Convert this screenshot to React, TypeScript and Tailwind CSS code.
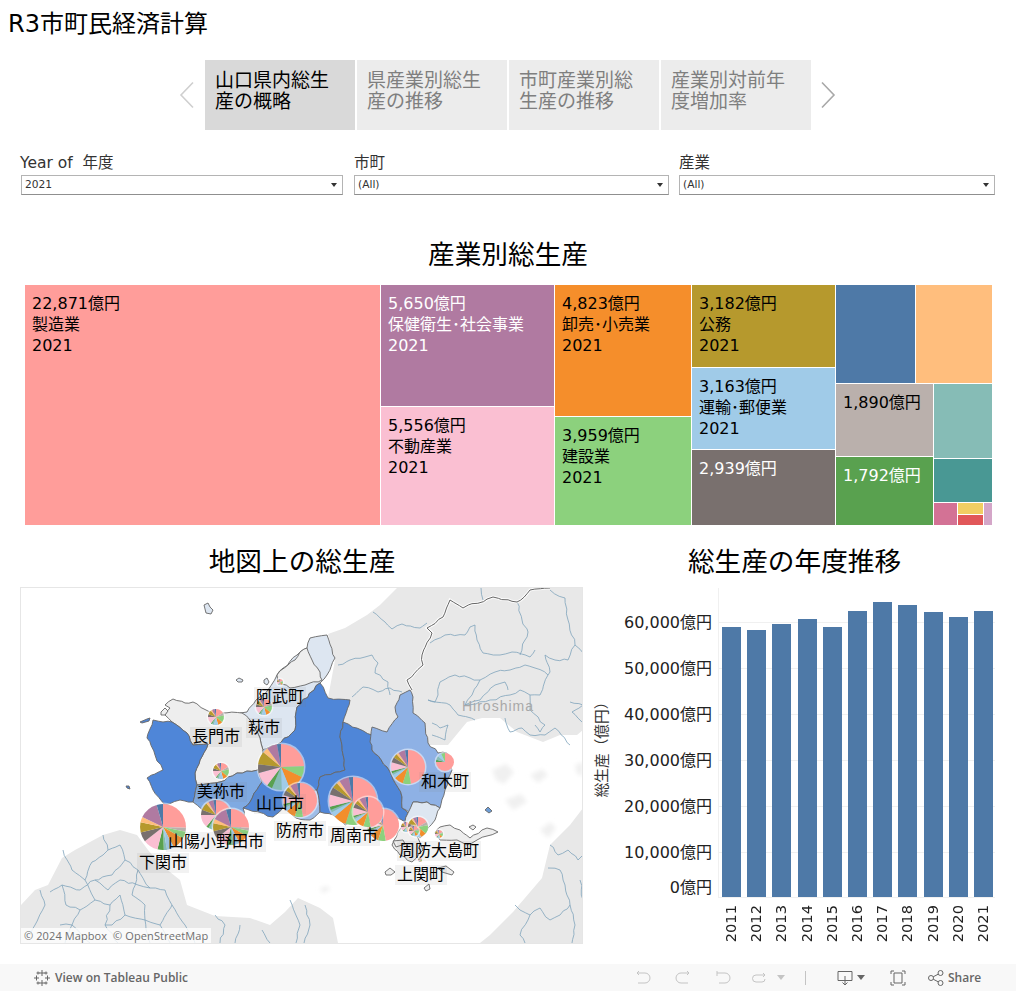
import type { ReactNode } from 'react'

const FONT = "font-['DejaVu_Sans','Noto_Sans_CJK_JP',sans-serif]"

const C = {
  salmon: '#ff9d9a', taupe: '#bab0ac', green: '#8cd17d', orange: '#f28e2b', sky: '#a0cbe8', teal: '#86bcb6',
  dgreen: '#59a14f', pink: '#fabfd2', grey: '#79706e', gold: '#b6992d', peach: '#ffbe7d', mauve: '#b07aa1', blue: '#4e79a7',
}

type Slice = [string, number]

const mixA: Slice[] = [[C.salmon, 88], [C.green, 28], [C.orange, 42], [C.sky, 20], [C.teal, 25], [C.dgreen, 14], [C.pink, 38], [C.grey, 22], [C.gold, 33], [C.peach, 14], [C.mauve, 26], [C.blue, 10]]
const mixB: Slice[] = [[C.salmon, 92], [C.taupe, 10], [C.green, 18], [C.orange, 32], [C.sky, 18], [C.teal, 8], [C.dgreen, 16], [C.pink, 38], [C.grey, 24], [C.gold, 26], [C.peach, 14], [C.mauve, 48], [C.blue, 16]]
const mixC: Slice[] = [[C.salmon, 170], [C.green, 28], [C.orange, 32], [C.sky, 12], [C.teal, 6], [C.dgreen, 8], [C.pink, 30], [C.grey, 18], [C.gold, 14], [C.peach, 8], [C.mauve, 24], [C.blue, 10]]
const mixD: Slice[] = [[C.salmon, 60], [C.taupe, 20], [C.green, 50], [C.orange, 35], [C.sky, 30], [C.teal, 15], [C.dgreen, 10], [C.pink, 50], [C.grey, 20], [C.gold, 30], [C.peach, 10], [C.mauve, 20], [C.blue, 10]]
const mixE: Slice[] = [[C.salmon, 270], [C.dgreen, 15], [C.teal, 25], [C.sky, 25], [C.green, 25]]

const pies: { x: number; y: number; r: number; mix: Slice[] }[] = [
  { x: 280, y: 682, r: 3, mix: mixD },
  { x: 216, y: 717, r: 8, mix: mixD },
  { x: 264, y: 707, r: 8, mix: mixD },
  { x: 221, y: 771, r: 8, mix: mixD },
  { x: 281, y: 767, r: 23, mix: mixA },
  { x: 300, y: 800, r: 17, mix: mixC },
  { x: 163, y: 827, r: 23, mix: mixB },
  { x: 216, y: 815, r: 15, mix: mixD },
  { x: 231, y: 827, r: 18, mix: mixB },
  { x: 353, y: 801, r: 24, mix: mixC },
  { x: 383, y: 825, r: 16, mix: mixC },
  { x: 368, y: 812, r: 15, mix: mixC },
  { x: 408, y: 767, r: 17, mix: mixC },
  { x: 445, y: 762, r: 9, mix: mixE },
  { x: 406, y: 827, r: 5, mix: mixD },
  { x: 418, y: 827, r: 10, mix: mixD },
  { x: 414, y: 831, r: 5, mix: mixD },
  { x: 439, y: 834, r: 4, mix: mixD },
  { x: 420, y: 860, r: 2, mix: mixD },
]

function Pie({ x, y, r, mix }: { x: number; y: number; r: number; mix: Slice[] }) {
  const total = mix.reduce((s, m) => s + m[1], 0)
  let a = 0
  const pt = (deg: number) => {
    const rad = ((deg - 90) * Math.PI) / 180
    return `${x + r * Math.cos(rad)} ${y + r * Math.sin(rad)}`
  }
  return (
    <g>
      <circle cx={x} cy={y} r={r + 1.5} fill="#ffffff" opacity="0.5" />
      {mix.map(([color, v], i) => {
        const sweep = (v / total) * 360
        const d = `M${x} ${y}L${pt(a)}A${r} ${r} 0 ${sweep > 180 ? 1 : 0} 1 ${pt(a + sweep)}Z`
        a += sweep
        return <path key={i} d={d} fill={color} />
      })}
    </g>
  )
}

// rough hand-traced outlines get a small wobble so they read as coast lines
const noise = (x: number, y: number) => {
  const n = Math.sin(x * 12.9898 + y * 78.233) * 43758.5453
  return n - Math.floor(n) - 0.5
}

function wobble(points: string, amp: number, closed: boolean) {
  const n = points.trim().split(/\s+/).map((p) => p.split(',').map(Number))
  const out: string[] = []
  const count = closed ? n.length : n.length - 1
  for (let i = 0; i < count; i++) {
    const [ax, ay] = n[i]
    const [bx, by] = n[(i + 1) % n.length]
    out.push(`${ax},${ay}`)
    const len = Math.hypot(bx - ax, by - ay)
    const steps = Math.max(1, Math.round(len / 5))
    for (let s = 1; s < steps; s++) {
      const px = ax + ((bx - ax) * s) / steps
      const py = ay + ((by - ay) * s) / steps
      const qx = Math.round(px * 2) / 2
      const qy = Math.round(py * 2) / 2
      out.push(`${(px + noise(qx, qy) * amp * 2).toFixed(1)},${(py + noise(qy, qx) * amp * 2).toFixed(1)}`)
    }
  }
  if (!closed) out.push(n[n.length - 1].join(','))
  return out.join(' ')
}

const regions: { fill: string; pts: string }[] = [
  { fill: '#dde6f1', pts: '240,713 247,712 256,700 268,690 277,675 297,655 307,648 310,638 327,635 335,658 327,675 320,683 297,707 295,730 277,745 263,750 260,738 250,720' },
  { fill: '#eeeeee', pts: '277,675 288,665 295,660 300,652 307,648 312,660 320,672 322,680 305,685 290,688 278,682' },
  { fill: '#eeeeee', pts: '165,705 173,699 185,703 193,702 210,712 223,713 242,713 250,720 260,738 263,750 258,770 237,773 220,782 197,785 195,773 200,760 208,744 193,745 187,733 172,722 165,715 170,708' },
  { fill: '#4f86d8', pts: '153,720 147,738 155,755 163,770 147,778 153,790 165,805 180,800 193,802 197,785 195,773 200,760 208,744 193,745 187,733 172,722 163,722' },
  { fill: '#7faae2', pts: '193,802 197,785 220,782 237,773 258,770 262,782 250,802 243,808 245,822 232,838 215,830 205,812' },
  { fill: '#4f86d8', pts: '320,683 328,698 350,700 343,722 340,737 345,770 320,777 317,790 300,790 287,798 283,808 273,817 243,808 250,802 262,782 258,770 263,750 277,745 295,730 297,707' },
  { fill: '#9fbde8', pts: '287,798 300,790 317,790 320,812 310,820 296,818 283,808' },
  { fill: '#4f86d8', pts: '343,722 372,735 372,750 387,767 402,797 402,808 408,813 405,822 380,808 370,818 345,825 333,815 320,812 317,790 320,777 345,770 340,737' },
  { fill: '#8eb1e5', pts: '410,690 400,695 395,707 398,717 387,732 372,727 370,742 372,750 387,767 402,797 402,808 410,813 413,802 427,802 440,808 445,790 452,770 447,753 438,753 428,743 425,723 413,713 413,697' },
  { fill: '#dde6f1', pts: '408,813 413,802 427,802 440,808 435,820 428,828 420,838 412,830 405,822' },
  { fill: '#eeeeee', pts: '405,822 418,838 423,850 412,862 400,855 392,845 398,832' },
  { fill: '#eeeeee', pts: '440,827 450,825 460,830 470,838 487,828 498,832 487,836 477,840 467,845 457,840 440,840 435,833' },
]

const labels = [
  { t: '阿武町', x: 280, y: 697 },
  { t: '萩市', x: 264, y: 728 },
  { t: '長門市', x: 216, y: 737 },
  { t: '美祢市', x: 221, y: 792 },
  { t: '山口市', x: 280, y: 804 },
  { t: '山陽小野田市', x: 216, y: 842 },
  { t: '下関市', x: 163, y: 863 },
  { t: '防府市', x: 300, y: 831 },
  { t: '周南市', x: 354, y: 836 },
  { t: '和木町', x: 445, y: 782 },
  { t: '周防大島町', x: 439, y: 851 },
  { t: '上関町', x: 421, y: 875 },
]

const rivers = [
  '373,612 385,622 392,629 402,624 420,628 427,623',
  '338,665 350,660 365,657 372,655 378,663 375,673 388,682 390,695',
  '352,697 363,687 378,692 390,688 402,692',
  '430,643 445,635 465,635 470,627 475,625 477,640 483,653 500,655 512,652 530,657 535,650',
  '517,602 522,620 528,632 525,640 520,655',
  '481,588 483,600',
  '550,590 565,598 568,620 575,645 568,660 555,660 545,655',
  '575,645 583,653',
  '545,655 550,672 548,675 535,668 525,665 510,670 495,672 480,680 470,678 455,675 440,682',
  '440,682 438,695 435,702 428,700 450,705 458,715 475,720',
  '480,680 472,695 465,705 480,700 495,685 505,682 508,690',
  '465,705 490,700 510,695 520,690 530,695 530,710 545,725 540,732 535,725',
  '548,675 540,695 530,695',
  '570,702 583,705 572,712 582,722',
  '432,723 440,728 448,725 445,740 432,735',
  '505,718 510,732 522,728 530,735',
  '530,735 545,735 555,728 570,745',
  '63,850 72,870 85,880 95,900 110,905 120,895',
  '103,835 108,850 120,845 125,860 138,870',
  '125,860 112,875 95,880 80,890 62,885 50,892',
  '138,870 150,888 165,890 172,905 160,925 170,943',
  '120,895 125,915 145,920 150,943',
  '95,900 80,910 72,925 90,943',
  '110,905 105,925 118,943',
  '172,905 185,925 195,943',
  '40,890 45,905 35,925 30,935',
  '85,880 92,862 103,855 108,850',
  '95,880 108,890 120,880 138,885 150,888',
  '62,885 66,905 80,910',
  '125,915 112,925 105,925',
  '145,920 160,925',
  '138,870 132,895 145,905 145,920',
  '60,925 72,925 65,943',
  '215,915 225,925 220,943',
  '240,925 235,943',
  '262,930 270,943',
  '290,900 300,925 296,943',
  '305,905 310,925 304,943',
  '550,845 558,855 568,850 578,860 583,855',
  '548,868 560,870 565,885 570,905 560,915 550,920 540,908 530,915 520,910 515,905',
  '570,905 575,925 572,943',
  '580,880 583,900',
  '530,915 520,935 525,943',
]

const border = wobble('550,588 530,590 517,602 493,597 463,608 450,600 443,617 427,628 432,633 422,655 423,665 407,680 412,690', 1.2, false)

function MapChart() {
  return (
    <div className="relative h-[357px] w-[563px] overflow-hidden border border-[#e6e6e6] bg-white">
      <svg className="block h-[355px] w-[561px]" viewBox="21 588 561 355">
        <defs>
          <filter id="soft"><feGaussianBlur stdDeviation="0.7" /></filter>
          <filter id="softer"><feGaussianBlur stdDeviation="2" /></filter>
        </defs>
        {/* surrounding land */}
        <g filter="url(#soft)" fill="#e8e8e8">
          <path d="M398 587L380 605 367 615 345 628 328 634 335 660 328 698 350 700 343 722 372 735 387 740 400 745 430 745 448 745 467 722 482 718 500 718 517 732 543 742 560 735 577 735 583 730 583 587Z" />
          <path d="M21 905L35 890 48 885 62 858 75 850 90 842 103 835 120 830 137 835 148 850 160 864 180 880 187 905 215 916 250 918 270 925 285 912 298 898 320 908 333 918 338 943 21 943Z" />
          <path d="M583 808L570 825 550 845 542 878 513 912 490 935 480 943 583 943Z" />
        </g>
        <g filter="url(#softer)" fill="#f0f0f0">
          <path d="M492 770l14 -6 8 8 -10 12 -8 -4Z M505 800l16 -6 6 8 -14 8Z M530 775l12 -6 6 6 -10 8Z M540 830l10 -8 6 6 -8 10Z M320 888l8 -2 2 4 -8 3Z M575 765l8 -3 0 14 -6 -2Z" />
        </g>
        <g fill="none" stroke="#7fa3bb" strokeWidth="0.8">
          {rivers.map((p) => <polyline key={p} points={wobble(p, 1.1, false)} />)}
        </g>
        <polyline points={border} fill="none" stroke="#ffffff" strokeWidth="3" opacity="0.8" />
        <polyline points={border} fill="none" stroke="#666666" strokeWidth="1" />
        <text x="498" y="711" textAnchor="middle" fill="#a8a8a8" fontSize="14" letterSpacing="1" fontFamily="'Liberation Sans', sans-serif">Hiroshima</text>

        {/* municipalities */}
        <g stroke="#666666" strokeWidth="0.9" strokeLinejoin="round">
          {regions.map((r) => <polygon key={r.pts} fill={r.fill} points={wobble(r.pts, 0.9, true)} />)}
          <path fill="#eeeeee" d="M393 841l10 -1 2 4 -9 3Z M385 872l5 -4 5 4 -4 3 -5 0Z M438 868l8 -2 8 6 -2 3 -10 -3Z M424 888l5 -4 1 5 -4 2Z M469 827l4 -2 3 2 -3 3Z" />
          <path fill="#dde6f1" d="M204 605l4 -2 2 4 3 3 -2 4 -5 -1Z M236 680l3 -2 4 2 -1 2 -4 0Z M264 680l3 -2 2 4 -2 3 -3 -2Z" />
          <path fill="#eeeeee" d="M161 712l4 -4 3 3 -3 4 -4 0Z" />
          <path fill="#4f86d8" d="M140 722l7 -3 3 -1 -1 3 -7 2Z M126 786l3 0 1 3 -3 -1Z" />
          <path fill="#6d9dd6" d="M485 810l3 -3 4 4 -3 2Z" />
        </g>
        {pies.map((p, i) => <Pie key={i} {...p} />)}
      </svg>
      {labels.map((l) => (
        <span
          key={l.t}
          className={`absolute -translate-x-1/2 -translate-y-1/2 whitespace-nowrap bg-[#808080]/10 px-[2px] text-[16px] leading-[20px] text-black ${FONT}`}
          style={{ left: l.x - 21, top: l.y - 588 }}
        >
          {l.t}
        </span>
      ))}
      <span className="absolute bottom-0 left-0 bg-white/80 px-[3px] font-['Open_Sans',sans-serif] text-[11px] leading-[15px] tracking-[0.1px] text-[#6f6f6f]">
        © 2024 Mapbox&nbsp; © OpenStreetMap
      </span>
    </div>
  )
}

const barData = [
  { y: 2011, v: 270, ml: 3 }, { y: 2012, v: 267, ml: 6 }, { y: 2013, v: 273, ml: 6 }, { y: 2014, v: 278, ml: 7 },
  { y: 2015, v: 270, ml: 6 }, { y: 2016, v: 286, ml: 6 }, { y: 2017, v: 295, ml: 6 }, { y: 2018, v: 292, ml: 6 },
  { y: 2019, v: 285, ml: 7 }, { y: 2020, v: 280, ml: 6 }, { y: 2021, v: 286, ml: 6 },
]

function BarChart() {
  const ticks = ['60,000億円', '50,000億円', '40,000億円', '30,000億円', '20,000億円', '10,000億円']
  return (
    <div className="ml-[3px] mt-px flex">
      <div className="flex h-[310px] w-[12px] items-center justify-center pt-[6px]">
        <span className="-rotate-90 whitespace-nowrap text-[14.67px] text-[#333333]">総生産（億円）</span>
      </div>
      <div className="w-[110px] pr-[6px] pt-[12px] text-right text-[16px] text-[#222222]">
        {ticks.map((t) => (
          <div key={t} className="flex h-[46px] items-center justify-end">{t}</div>
        ))}
        <div className="flex h-[24px] items-center justify-end">0億円</div>
      </div>
      <div className="w-[277px]">
        <div className="relative h-[310px] border-b border-l border-[#f0f0f0]">
          {[34, 80, 126, 172, 218, 264].map((t) => (
            <div key={t} className="absolute left-0 right-0 h-px bg-[#f0f0f0]" style={{ top: t }} />
          ))}
          <div className="absolute inset-0 flex items-end">
            {barData.map((b) => (
              <div key={b.y} className="w-[19px] bg-[#4e79a7]" style={{ height: b.v, marginLeft: b.ml }} />
            ))}
          </div>
        </div>
        <div className="flex pt-[7px]">
          {barData.map((b) => (
            <div key={b.y} className="flex w-[19px] justify-center" style={{ marginLeft: b.ml }}>
              <span className="text-[14.67px] leading-[19px] text-[#222222] [writing-mode:vertical-rl] rotate-180">{b.y}</span>
            </div>
          ))}
        </div>
      </div>
    </div>
  )
}

function Cell({ color, lines, light, className }: { color: string; lines?: string[]; light?: boolean; className: string }) {
  return (
    <div className={`${className} pl-[7px] pt-[8px] text-[16px] leading-[21px] ${light ? 'text-white' : 'text-black'}`} style={{ backgroundColor: color }}>
      {lines?.map((l) => <div key={l} className="whitespace-nowrap">{l}</div>)}
    </div>
  )
}

function Treemap() {
  return (
    <div className="ml-[25px] flex h-[240px] w-[967px] gap-px">
      <Cell className="w-[355px]" color="#ff9d9a" lines={['22,871億円', '製造業', '2021']} />
      <div className="flex w-[173px] flex-col gap-px">
        <Cell className="h-[121px]" color="#b07aa1" light lines={['5,650億円', '保健衛生･社会事業', '2021']} />
        <Cell className="flex-1" color="#fabfd2" lines={['5,556億円', '不動産業', '2021']} />
      </div>
      <div className="flex w-[136px] flex-col gap-px">
        <Cell className="h-[131px]" color="#f58e2b" lines={['4,823億円', '卸売･小売業', '2021']} />
        <Cell className="flex-1" color="#8cd17d" lines={['3,959億円', '建設業', '2021']} />
      </div>
      <div className="flex w-[143px] flex-col gap-px">
        <Cell className="h-[82px]" color="#b6992d" lines={['3,182億円', '公務', '2021']} />
        <Cell className="h-[81px]" color="#a0cbe8" lines={['3,163億円', '運輸･郵便業', '2021']} />
        <Cell className="flex-1" color="#79706e" light lines={['2,939億円']} />
      </div>
      <div className="flex w-[156px] flex-col gap-px">
        <div className="flex h-[98px] gap-px">
          <div className="w-[79px] bg-[#4e79a7]" />
          <div className="flex-1 bg-[#ffbe7d]" />
        </div>
        <div className="flex flex-1 gap-px">
          <div className="flex w-[97px] flex-col gap-px">
            <Cell className="h-[72px]" color="#bab0ac" lines={['1,890億円']} />
            <Cell className="flex-1" color="#59a14f" light lines={['1,792億円']} />
          </div>
          <div className="flex flex-1 flex-col gap-px">
            <div className="h-[74px] bg-[#86bcb6]" />
            <div className="h-[43px] bg-[#499894]" />
            <div className="flex flex-1 gap-px">
              <div className="w-[23px] bg-[#d37295]" />
              <div className="flex w-[25px] flex-col gap-px">
                <div className="h-[11px] bg-[#f1ce63]" />
                <div className="flex-1 bg-[#e15759]" />
              </div>
              <div className="flex-1 bg-[#d4a6c8]" />
            </div>
          </div>
        </div>
      </div>
    </div>
  )
}

function Tab({ lines, active }: { lines: [string, string]; active?: boolean }) {
  return (
    <div className={`h-[70px] w-[150px] pl-[10px] pt-[10px] text-[19px] leading-[21px] ${active ? 'bg-[#d9d9d9] text-black' : 'bg-[#ececec] text-[#7f7f7f]'}`}>
      <div>{lines[0]}</div>
      <div>{lines[1]}</div>
    </div>
  )
}

function Filter({ label, value, className }: { label: string; value: string; className: string }) {
  return (
    <div className={className}>
      <div className="h-[22px] text-[15.5px] leading-[21px] text-[#333333]">{label}</div>
      <div className="flex h-[20px] items-center justify-between border border-[#b4b4b4] border-b-[#8f8f8f] pl-[3px] pr-[5px] text-[10.67px] text-[#333333]">
        <span>{value}</span>
        <span className="h-0 w-0 border-x-[3px] border-t-[4px] border-x-transparent border-t-[#333333]" />
      </div>
    </div>
  )
}

function Chevron({ color, flip }: { color: string; flip?: boolean }) {
  return (
    <svg width="16" height="28" viewBox="0 0 16 28" className={flip ? 'rotate-180' : ''}>
      <path d="M14 1.5L2 14l12 12.5" fill="none" stroke={color} strokeWidth="1.6" />
    </svg>
  )
}

function ToolIcon({ children, className }: { children: ReactNode; className: string }) {
  return (
    <svg width="18" height="18" viewBox="0 0 18 18" fill="none" strokeWidth="1" className={className}>
      {children}
    </svg>
  )
}

function Toolbar() {
  return (
    <div className="flex h-[27px] items-center bg-[#f8f8f8] font-['Open_Sans',sans-serif] text-[12px] font-semibold text-[#666666]">
      <svg width="18" height="18" viewBox="0 0 18 18" stroke="#666666" strokeWidth="1" className="ml-[33px]">
        <path d="M9 1v6M6 4h6M9 11v6M6 14h6M3.5 6.5v5M1 9h5M14.5 6.5v5M12 9h5M5 2.5v3M3.5 4h3M13 2.5v3M11.5 4h3M5 12.5v3M3.5 14h3M13 12.5v3M11.5 14h3" />
      </svg>
      <span className="ml-[4px]">View on Tableau Public</span>
      <ToolIcon className="ml-[446px] stroke-[#c4c4c4]">
        <path d="M3 4h8a4.5 4.5 0 0 1 0 10H4M3 4l2-2M3 4l2 2" />
      </ToolIcon>
      <ToolIcon className="ml-[22px] stroke-[#c4c4c4]">
        <path d="M15 4H7a4.5 4.5 0 0 0 0 10h7M15 4l-2-2M15 4l-2 2" />
      </ToolIcon>
      <ToolIcon className="ml-[22px] stroke-[#c4c4c4]">
        <path d="M3 2v5M3 4h8a4.5 4.5 0 0 1 0 10H5" />
      </ToolIcon>
      <ToolIcon className="ml-[18px] stroke-[#c4c4c4]">
        <path d="M15 6H6a3.5 3.5 0 0 0 0 7h6a3 3 0 0 0 3-3M15 6l-2-2M15 6l-2 2" />
      </ToolIcon>
      <span className="ml-[9px] h-0 w-0 border-x-[4px] border-t-[5px] border-x-transparent border-t-[#c4c4c4]" />
      <span className="ml-[20px] h-[14px] w-px bg-[#c4c4c4]" />
      <ToolIcon className="ml-[30px] stroke-[#666666]">
        <path d="M2 2.5h14v9H2zM9 7v9M6.5 13.5L9 16l2.5-2.5" />
      </ToolIcon>
      <span className="ml-[3px] h-0 w-0 border-x-[4px] border-t-[5px] border-x-transparent border-t-[#666666]" />
      <ToolIcon className="ml-[24px] stroke-[#666666]">
        <path d="M5 4h8v10H5zM2 5V2h3M13 2h3v3M16 13v3h-3M5 16H2v-3" />
      </ToolIcon>
      <ToolIcon className="ml-[20px] stroke-[#666666]">
        <circle cx="4" cy="9" r="2.5" />
        <circle cx="13.5" cy="4" r="2.5" />
        <circle cx="13.5" cy="14" r="2.5" />
        <path d="M6.2 7.8l5-2.6M6.2 10.2l5 2.6" />
      </ToolIcon>
      <span className="ml-[3px]">Share</span>
    </div>
  )
}

export default function App() {
  return (
    <div className={`flex h-[991px] w-[1016px] flex-col overflow-hidden bg-white ${FONT}`}>
      <div className="flex h-[48px] items-center pl-2 text-[24px] text-black">R3市町民経済計算</div>
      <div className="mt-[12px] flex h-[70px] items-center pl-[179px]">
        <Chevron color="#cfcfcf" />
        <div className="ml-[10px] flex gap-[2px]">
          <Tab active lines={['山口県内総生', '産の概略']} />
          <Tab lines={['県産業別総生', '産の推移']} />
          <Tab lines={['市町産業別総', '生産の推移']} />
          <Tab lines={['産業別対前年', '度増加率']} />
        </div>
        <div className="ml-[9px]"><Chevron color="#a8a8a8" flip /></div>
      </div>
      <div className="mt-[23px] flex">
        <Filter className="ml-[20px] w-[323px] [&>div:last-child]:ml-px" label={'Year of\u00a0 年度'} value="2021" />
        <Filter className="ml-[11px] w-[315px]" label="市町" value="(All)" />
        <Filter className="ml-[10px] w-[316px]" label="産業" value="(All)" />
      </div>
      <div className="mt-[40px] h-[50px] text-center text-[26.67px] leading-[40px] text-black">産業別総生産</div>
      <Treemap />
      <div className="mt-[16px] flex">
        <div className="ml-[20px] w-[564px]">
          <div className="h-[46px] text-center text-[26.67px] leading-[42px] text-black">地図上の総生産</div>
          <MapChart />
        </div>
        <div className="ml-[9px] w-[423px]">
          <div className="h-[46px] pr-[20px] text-center text-[26.67px] leading-[42px] text-black">総生産の年度推移</div>
          <BarChart />
        </div>
      </div>
      <div className="flex-1" />
      <Toolbar />
    </div>
  )
}
